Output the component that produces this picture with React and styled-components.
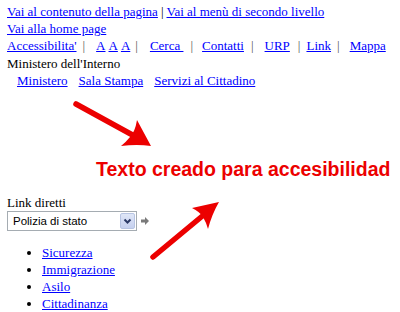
import React from "react";
import styled, { createGlobalStyle } from "styled-components";

const GlobalStyle = createGlobalStyle`
  html, body { margin: 0; padding: 0; background: #ffffff; }
  body {
    font-family: "Liberation Serif", "Times New Roman", serif;
    font-size: 13px;
    color: #000000;
  }
`;

const Page = styled.div`
  position: relative;
  width: 400px;
  height: 312px;
  overflow: hidden;
  box-sizing: border-box;
  padding: 3px 0 0 7px;
`;

const Row = styled.div`
  display: flex;
  align-items: baseline;
  white-space: nowrap;
  height: ${(p) => p.$h || 17}px;
  line-height: ${(p) => p.$h || 17}px;
  padding-left: ${(p) => p.$indent || 0}px;
`;

const Link = styled.a`
  color: #0000ff;
  text-decoration: underline;
  cursor: pointer;
  margin-right: ${(p) => p.$mr || 0}px;
`;

const Sep = styled.span`
  color: ${(p) => (p.$gray ? "#555555" : "#000000")};
  padding-left: ${(p) => p.$l}px;
  padding-right: ${(p) => p.$r}px;
`;

const Plain = styled.span`
  color: #000000;
`;

const Annotation = styled.div`
  margin-top: 68px;
  padding-left: 89px;
  height: 24px;
  line-height: 24px;
  font-family: "Liberation Sans", Arial, sans-serif;
  font-weight: bold;
  font-size: 19.5px;
  color: #ec0000;
  white-space: nowrap;
`;

const Label = styled.div`
  margin-top: 13px;
  height: 17px;
  line-height: 17px;
`;

const SelectRow = styled.div`
  display: flex;
  align-items: center;
  height: 20px;
`;

const SelectBox = styled.div`
  box-sizing: border-box;
  width: 130px;
  height: 20px;
  border: 1px solid #a5acb2;
  background: #ffffff;
  display: flex;
  align-items: center;
  justify-content: space-between;
  padding: 0 1px 0 5px;
  font-family: "Liberation Sans", Arial, sans-serif;
  font-size: 11.5px;
  color: #000000;
`;

const DropButton = styled.div`
  box-sizing: border-box;
  width: 15px;
  height: 16px;
  border: 1px solid #b7c4e2;
  border-radius: 2px;
  background: linear-gradient(#dfe6f7, #c5d0ef);
  display: flex;
  align-items: center;
  justify-content: center;
`;

const GoIcon = styled.svg`
  margin-left: 4px;
`;

const List = styled.ul`
  margin: 13px 0 0 0;
  padding-left: 35px;
  line-height: 17px;
  list-style: disc;
`;

const Item = styled.li`
  height: 17px;
`;

const Overlay = styled.svg`
  position: absolute;
  left: 0;
  top: 0;
  pointer-events: none;
`;

const navItems = [
  { t: "Contatti", l: 7, r: 11 },
  { t: "URP", l: 8, r: 6 },
  { t: "Link", l: 6, r: 10 },
];

export default function App() {
  return (
    <>
      <GlobalStyle />
      <Page>
        <Row>
          <Link>Vai al contenuto della pagina</Link>
          <Sep $l={3} $r={3}>|</Sep>
          <Link>Vai al menù di secondo livello</Link>
        </Row>
        <Row $h={18}>
          <Link>Vai alla home page</Link>
        </Row>
        <Row $h={16.5}>
          <Link>Accessibilita'</Link>
          <Sep $gray $l={6} $r={11}>|</Sep>
          <Link $mr={3}>A</Link>
          <Link $mr={3}>A</Link>
          <Link>A</Link>
          <Sep $gray $l={5} $r={12}>|</Sep>
          <Link>Cerca&nbsp;</Link>
          <Sep $gray $l={7} $r={9}>|</Sep>
          {navItems.map((n) => (
            <React.Fragment key={n.t}>
              <Link>{n.t}</Link>
              <Sep $gray $l={n.l} $r={n.r}>|</Sep>
            </React.Fragment>
          ))}
          <Link>Mappa</Link>
        </Row>
        <Row $h={17.5}>
          <Plain>Ministero dell'Interno</Plain>
        </Row>
        <Row $indent={10}>
          <Link $mr={11}>Ministero</Link>
          <Link $mr={11}>Sala Stampa</Link>
          <Link>Servizi al Cittadino</Link>
        </Row>

        <Annotation>Texto creado para accesibilidad</Annotation>

        <Label>Link diretti</Label>
        <SelectRow>
          <SelectBox>
            <span>Polizia di stato</span>
            <DropButton>
              <svg width="9" height="7" viewBox="0 0 9 7">
                <path d="M1.5 1.5 L4.5 4.5 L7.5 1.5" fill="none" stroke="#2b3a66" strokeWidth="2" />
              </svg>
            </DropButton>
          </SelectBox>
          <GoIcon width="8" height="8" viewBox="0 0 8 8">
            <path d="M0 2.5 H4 V0 L8 4 L4 8 V5.5 H0 Z" fill="#7a7a7a" />
          </GoIcon>
        </SelectRow>

        <List>
          <Item><Link>Sicurezza</Link></Item>
          <Item><Link>Immigrazione</Link></Item>
          <Item><Link>Asilo</Link></Item>
          <Item><Link>Cittadinanza</Link></Item>
        </List>

        <Overlay width="400" height="312" viewBox="0 0 400 312">
          <g fill="#ec0000" stroke="none">
            <line x1="76" y1="104" x2="138" y2="138" stroke="#ec0000" strokeWidth="5.5" strokeLinecap="round" />
            <path d="M151 146 L137 120 Q135 132 130 137 Q126 142 121 146 Q137 144 151 146 Z" />
            <line x1="153" y1="257" x2="206" y2="213" stroke="#ec0000" strokeWidth="5.5" strokeLinecap="round" />
            <path d="M219 202 L192 208 Q200 212 203 217 Q206 222 208 229 Q212 214 219 202 Z" />
          </g>
        </Overlay>
      </Page>
    </>
  );
}
